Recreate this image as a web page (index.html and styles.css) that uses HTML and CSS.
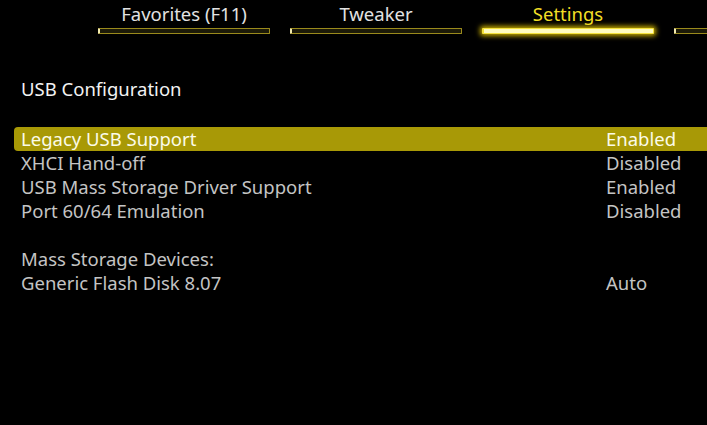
FILE: index.html
```html
<!DOCTYPE html>
<html lang="en">
<head>
    <meta charset="UTF-8">
    <title>BIOS - USB Configuration</title>
    <link rel="stylesheet" href="styles.css">
</head>
<body>
    <div class="tabs">
        <div class="tab">
            <div class="tab-label">Favorites (F11)</div>
            <div class="tab-bar"></div>
        </div>
        <div class="tab">
            <div class="tab-label">Tweaker</div>
            <div class="tab-bar"></div>
        </div>
        <div class="tab active">
            <div class="tab-label">Settings</div>
            <div class="tab-bar"></div>
        </div>
        <div class="tab">
            <div class="tab-label"></div>
            <div class="tab-bar"></div>
        </div>
    </div>

    <div class="content">
        <h1 class="section-title">USB Configuration</h1>

        <div class="options">
            <div class="option selected">
                <span class="option-name">Legacy USB Support</span>
                <span class="option-value">Enabled</span>
            </div>
            <div class="option">
                <span class="option-name">XHCI Hand-off</span>
                <span class="option-value">Disabled</span>
            </div>
            <div class="option">
                <span class="option-name">USB Mass Storage Driver Support</span>
                <span class="option-value">Enabled</span>
            </div>
            <div class="option">
                <span class="option-name">Port 60/64 Emulation</span>
                <span class="option-value">Disabled</span>
            </div>
        </div>

        <div class="options devices">
            <div class="option">
                <span class="option-name">Mass Storage Devices:</span>
                <span class="option-value"></span>
            </div>
            <div class="option">
                <span class="option-name">Generic Flash Disk 8.07</span>
                <span class="option-value">Auto</span>
            </div>
        </div>
    </div>
</body>
</html>
```

FILE: styles.css
```css
html, body {
    margin: 0;
    height: 100%;
    overflow: hidden;
}
body {
    background-color: #000;
    font-family: "Noto Sans", "Open Sans", sans-serif;
    color: #c4c4c4;
}
.tabs {
    display: flex;
    gap: 20px;
    padding-left: 98px;
    white-space: nowrap;
}
.tab {
    flex: 0 0 172px;
}
.tab-label {
    height: 28px;
    line-height: 28px;
    text-align: center;
    font-size: 18.5px;
    color: #e2e2e2;
}
.tab-bar {
    height: 4px;
    border: 1px solid #9a8a1c;
    border-left: 2px solid #f2eab0;
    border-radius: 1px;
    background-color: #1c1a08;
}
.tab.active .tab-label {
    color: #f2de26;
}
.tab.active .tab-bar {
    border-color: #f4e23a;
    background-color: #fffcc0;
    box-shadow: 0 0 5px 2px rgba(230, 200, 0, 0.85);
}
.content {
    padding-top: 41px;
}
.section-title {
    margin: 0 0 24px 21px;
    height: 28px;
    line-height: 28px;
    font-size: 18.5px;
    font-weight: normal;
    color: #f2f2f2;
}
.options {
    margin-left: 14px;
}
.devices {
    margin-top: 24px;
}
.option {
    display: grid;
    grid-template-columns: 585px 1fr;
    height: 24px;
    line-height: 24px;
    padding-left: 7px;
    font-size: 18.5px;
    white-space: nowrap;
}
.option.selected {
    background-color: #a89906;
    border-radius: 4px 0 0 4px;
    color: #fbfbe8;
}
```
